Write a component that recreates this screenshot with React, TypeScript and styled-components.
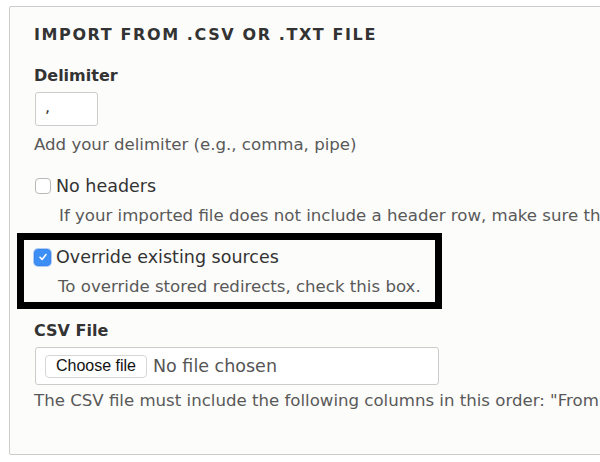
import styled, { createGlobalStyle } from 'styled-components'

const GlobalStyle = createGlobalStyle`
  html, body {
    margin: 0;
    padding: 0;
    background: #fff;
    overflow: hidden;
  }
  body {
    font-family: 'DejaVu Sans', Verdana, sans-serif;
    color: #333;
  }
`

const Fieldset = styled.section`
  margin: 6px 0 0 9px;
  width: 700px;
  height: 449px;
  box-sizing: border-box;
  border: 1px solid #ccc;
  border-radius: 2px;
  background: #fcfcfa;
  padding: 17px 24px 0 24px;
  overflow: hidden;
`

const Title = styled.h2`
  margin: 0 0 19px;
  font-size: 16px;
  font-weight: bold;
  letter-spacing: 0.1em;
  text-transform: uppercase;
  color: #333;
  line-height: 22px;
`

const Item = styled.div<{ $gap?: number }>`
  margin-bottom: ${p => p.$gap ?? 20}px;
`

const Label = styled.label`
  display: block;
  font-size: 16px;
  font-weight: bold;
  line-height: 22px;
  margin-bottom: 5px;
  color: #333;
`

const TextInput = styled.div`
  width: 63px;
  height: 34px;
  box-sizing: border-box;
  border: 1px solid #ccc;
  border-radius: 3px;
  background: #fff;
  margin-left: 1px;
  padding: 4px 0 0 9px;
  font-size: 16px;
  color: #333;
`

const Description = styled.div<{ $indent?: boolean; $top?: number }>`
  font-size: 16.6px;
  line-height: 20px;
  color: #595959;
  margin-top: ${p => p.$top ?? 9}px;
  margin-left: ${p => (p.$indent ? 25 : 0)}px;
  white-space: nowrap;
`

const CheckRow = styled.div`
  display: flex;
  align-items: center;
  gap: 5px;
  font-size: 17.5px;
  line-height: 22px;
  color: #333;
`

const Box = styled.span<{ $checked?: boolean }>`
  display: inline-flex;
  align-items: center;
  justify-content: center;
  flex: none;
  width: ${p => (p.$checked ? 17 : 16)}px;
  height: ${p => (p.$checked ? 17 : 16)}px;
  box-sizing: border-box;
  margin-left: 1px;
  border-radius: 4px;
  border: 1px solid ${p => (p.$checked ? '#3a85f0' : '#b9b9b9')};
  background: ${p => (p.$checked ? '#3d8ff5' : '#fff')};
  box-shadow: ${p => (p.$checked ? '0 0 0 1px rgba(90, 150, 240, 0.45)' : 'none')};
`

const Highlight = styled.div`
  margin: 0 0 11px -17px;
  width: fit-content;
  border: 7px solid #000;
  padding: 6px 14px 5px 9px;
`

const FileBox = styled.div`
  display: flex;
  align-items: center;
  width: 404px;
  height: 38px;
  box-sizing: border-box;
  margin-left: 1px;
  border: 1px solid #ccc;
  border-radius: 3px;
  background: #fff;
  padding-left: 9px;
  gap: 6px;
`

const FileButton = styled.span`
  display: inline-flex;
  align-items: center;
  justify-content: center;
  height: 23px;
  width: 102px;
  box-sizing: border-box;
  border: 1px solid #d6d6d6;
  border-radius: 4px;
  background: #fff;
  font-family: 'Liberation Sans', Arial, sans-serif;
  font-size: 16px;
  color: #111;
`

const FileName = styled.span`
  font-size: 17.5px;
  color: #555;
`

export default function App() {
  return (
    <>
      <GlobalStyle />
      <Fieldset>
        <Title>Import from .csv or .txt file</Title>

        <Item $gap={20}>
          <Label>Delimiter</Label>
          <TextInput>,</TextInput>
          <Description>Add your delimiter (e.g., comma, pipe)</Description>
        </Item>

        <Item $gap={7}>
          <CheckRow>
            <Box />
            No headers
          </CheckRow>
          <Description $indent>
            If your imported file does not include a header row, make sure that the columns are in the order specified below.
          </Description>
        </Item>

        <Highlight>
          <CheckRow>
            <Box $checked>
              <svg width="10" height="10" viewBox="0 0 10 10">
                <path d="M2 5.3 L4.1 7.4 L8 2.6" fill="none" stroke="#fff" strokeWidth="1.6" strokeLinecap="round" strokeLinejoin="round" />
              </svg>
            </Box>
            Override existing sources
          </CheckRow>
          <Description $indent>To override stored redirects, check this box.</Description>
        </Highlight>

        <Item>
          <Label>CSV File</Label>
          <FileBox>
            <FileButton>Choose file</FileButton>
            <FileName>No file chosen</FileName>
          </FileBox>
          <Description $top={6}>
            The CSV file must include the following columns in this order: "From URL","To URL","Redirect status","From language".
          </Description>
        </Item>
      </Fieldset>
    </>
  )
}
